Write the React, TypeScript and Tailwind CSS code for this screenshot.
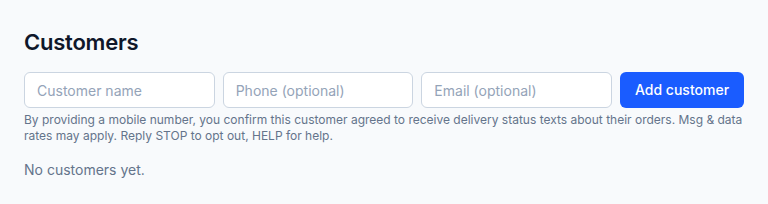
export default function App() {
  return (
    <div className="min-h-[204px] bg-[#f8fafc] px-6 pt-7 font-['Inter',sans-serif]">
      <h2 className="text-[22px] font-semibold text-[#0f172a] leading-7 tracking-[-0.01em]">Customers</h2>

      <div className="mt-4 flex gap-2">
        <input
          placeholder="Customer name"
          className="h-9 min-w-0 flex-1 rounded-md border border-[#cbd5e1] bg-white px-3 text-sm text-[#0f172a] placeholder:text-[#94a3b8] outline-none"
        />
        <input
          placeholder="Phone (optional)"
          className="h-9 min-w-0 flex-1 rounded-md border border-[#cbd5e1] bg-white px-3 text-sm text-[#0f172a] placeholder:text-[#94a3b8] outline-none"
        />
        <input
          placeholder="Email (optional)"
          className="h-9 min-w-0 flex-1 rounded-md border border-[#cbd5e1] bg-white px-3 text-sm text-[#0f172a] placeholder:text-[#94a3b8] outline-none"
        />
        <button className="h-9 w-[124px] shrink-0 rounded-md bg-[#1a5cff] text-sm font-medium text-white">
          Add customer
        </button>
      </div>

      <p className="mt-1 text-xs leading-4 text-[#64748b]">
        By providing a mobile number, you confirm this customer agreed to receive delivery status texts about their orders. Msg &amp; data rates may apply. Reply STOP to opt out, HELP for help.
      </p>

      <p className="mt-4 text-sm leading-5 text-[#64748b]">No customers yet.</p>
    </div>
  );
}
